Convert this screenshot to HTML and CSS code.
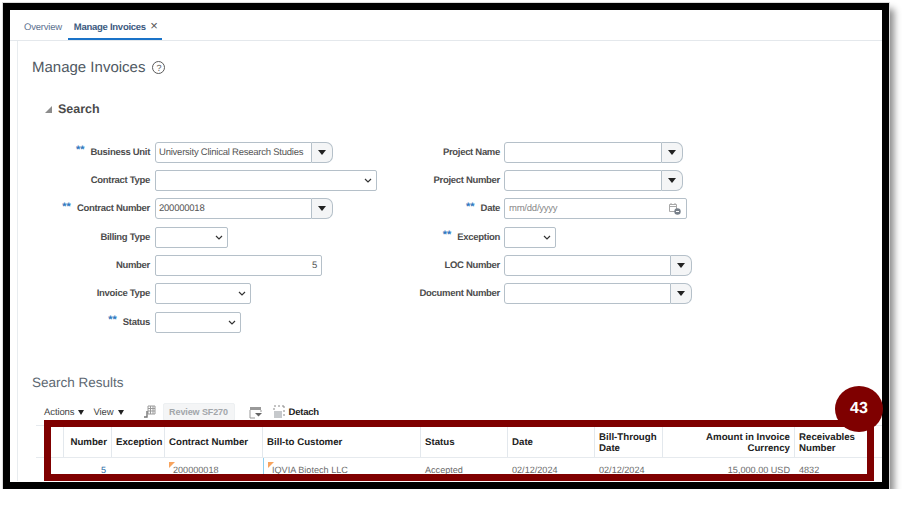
FILE: index.html
```html
<!DOCTYPE html>
<html lang="en">
<head>
<meta charset="utf-8">
<title>Manage Invoices</title>
<link rel="stylesheet" href="styles.css">
</head>
<body>
<div class="frame">
  <nav class="tabs">
    <span class="tab">Overview</span>
    <span class="tab active">Manage Invoices <span class="close">×</span></span>
  </nav>
  <main class="panel">
    <h1 class="title">Manage Invoices <span class="help">?</span></h1>
    <h2 class="search-head"><span class="disclosure"></span>Search</h2>
    <div class="form">
      <label class="label"><span class="stars">**</span>Business Unit</label>
      <div class="combo w-178"><span class="value">University Clinical Research Studies</span><span class="drop"><i></i></span></div>
      <label class="label">Project Name</label>
      <div class="combo w-179"><span class="value"></span><span class="drop"><i></i></span></div>

      <label class="label">Contract Type</label>
      <div class="input w-222"><svg class="chev" viewBox="0 0 8 5"><path d="M1 1l3 3 3-3"/></svg></div>
      <label class="label">Project Number</label>
      <div class="combo w-179"><span class="value"></span><span class="drop"><i></i></span></div>

      <label class="label"><span class="stars">**</span>Contract Number</label>
      <div class="combo w-178"><span class="value">200000018</span><span class="drop"><i></i></span></div>
      <label class="label"><span class="stars">**</span>Date</label>
      <div class="input w-183"><span class="placeholder">mm/dd/yyyy</span>
        <svg class="cal" viewBox="0 0 13 13"><path d="M1.500 2.500h7v7h-7zM3 1v2M7 1v2M1.500 4.500h7" fill="none" stroke="#a8a8a8"/><circle cx="9.500" cy="9.500" r="3.200" fill="#77808a"/><path d="M8 9.500h3" stroke="#fff"/></svg>
      </div>

      <label class="label">Billing Type</label>
      <div class="input w-73"><svg class="chev" viewBox="0 0 8 5"><path d="M1 1l3 3 3-3"/></svg></div>
      <label class="label"><span class="stars">**</span>Exception</label>
      <div class="input w-52"><svg class="chev" viewBox="0 0 8 5"><path d="M1 1l3 3 3-3"/></svg></div>

      <label class="label">Number</label>
      <div class="input w-167 right"><span>5</span></div>
      <label class="label">LOC Number</label>
      <div class="combo w-188"><span class="value"></span><span class="drop"><i></i></span></div>

      <label class="label">Invoice Type</label>
      <div class="input w-96"><svg class="chev" viewBox="0 0 8 5"><path d="M1 1l3 3 3-3"/></svg></div>
      <label class="label">Document Number</label>
      <div class="combo w-188"><span class="value"></span><span class="drop"><i></i></span></div>

      <label class="label"><span class="stars">**</span>Status</label>
      <div class="input w-86"><svg class="chev" viewBox="0 0 8 5"><path d="M1 1l3 3 3-3"/></svg></div>
    </div>

    <h2 class="results-head">Search Results</h2>
    <div class="toolbar">
      <span class="menu">Actions<i></i></span>
      <span class="menu">View<i></i></span>
      <svg class="tool tool-freeze" viewBox="0 0 12 14"><path d="M4 1h7v8H4zM4 3.500h7M6.500 1v8M9 1v8M4 6h7" fill="none" stroke="#9a9a9a"/><path d="M3 6v6H0" fill="none" stroke="#777" stroke-width="1.400"/></svg>
      <button class="btn-disabled">Review SF270</button>
      <svg class="tool tool-export" viewBox="0 0 13 13"><path d="M1 1h11v3H1z" fill="#999"/><path d="M1 4v8h5M12 4v2" fill="none" stroke="#999"/><path d="M6 7h7l-3.500 3.500z" fill="#666"/></svg>
      <svg class="tool tool-detach" viewBox="0 0 12 14"><path d="M1 1h2M5 1h2M9 1h2v2M11 5v2M11 9v2M1 3v2" fill="none" stroke="#888"/><path d="M1 6h8v7H1z" fill="#c6c9cc"/></svg>
      <span class="detach">Detach</span>
    </div>
    <div class="table">
      <div class="hrow">
        <div class="th"></div>
        <div class="th r">Number</div>
        <div class="th">Exception</div>
        <div class="th">Contract Number</div>
        <div class="th">Bill-to Customer</div>
        <div class="th">Status</div>
        <div class="th">Date</div>
        <div class="th">Bill-Through<br>Date</div>
        <div class="th r">Amount in Invoice<br>Currency</div>
        <div class="th">Receivables<br>Number</div>
      </div>
      <div class="drow">
        <div class="td"></div>
        <div class="td r link">5</div>
        <div class="td"></div>
        <div class="td flagged">200000018</div>
        <div class="td flagged mark">IQVIA Biotech LLC</div>
        <div class="td">Accepted</div>
        <div class="td">02/12/2024</div>
        <div class="td">02/12/2024</div>
        <div class="td r">15,000.00 USD</div>
        <div class="td">4832</div>
      </div>
    </div>
  </main>
  <div class="callout"></div>
  <div class="badge">43</div>
</div>
</body>
</html>
```
FILE: styles.css
```css
* { box-sizing: border-box; }
html, body { margin: 0; padding: 0; background: #fff; overflow: hidden; }
body {
  padding: 3px 0 0 3px;
  font-family: "Liberation Sans", Arial, sans-serif;
  color: #4f4f4f;
  text-rendering: geometricPrecision;
}

.frame {
  position: relative;
  width: 886px;
  height: 486px;
  border: 7px solid #000;
  background: #fff;
  box-shadow: 0 0 0 1px #dcdcdc, 5px 6px 7px #8a8a8a;
}

.tabs {
  display: flex;
  height: 31px;
  padding-left: 7px;
  align-items: flex-end;
  border-bottom: 1px solid #e4e8ec;
}
.tab {
  height: 30px;
  padding: 11px 7px 0;
  font-size: 9.500px;
  letter-spacing: -0.220px;
  line-height: 13px;
  color: #5d7290;
  white-space: nowrap;
}
.tab.active {
  width: 94px;
  margin-left: -1px;
  padding-left: 6px;
  font-weight: bold;
  color: #3c5a80;
  letter-spacing: -0.270px;
  border-bottom: 2px solid #1a73c8;
}
.close { margin-left: 2px; font-size: 13px; font-weight: normal; color: #555; line-height: 10px; }

.panel {
  margin-left: 7px;
  height: 440px;
  border-left: 1px solid #e8ecef;
  overflow: hidden;
}
.title {
  display: flex;
  align-items: center;
  gap: 7px;
  margin: 16.500px 0 0 14px;
  height: 20px;
  font-size: 15px;
  font-weight: normal;
  color: #4f5963;
}
.help {
  display: inline-flex;
  align-items: center;
  justify-content: center;
  width: 13px;
  height: 13px;
  border: 1px solid #5a5a5a;
  border-radius: 50%;
  font-size: 9px;
  color: #555;
}
.search-head {
  display: flex;
  align-items: center;
  margin: 23.500px 0 0 27px;
  height: 16px;
  font-size: 12.500px;
  font-weight: bold;
  color: #4a4a4a;
}
.disclosure {
  width: 0;
  height: 0;
  margin-right: 6px;
  border-style: solid;
  border-width: 0 0 7px 7px;
  border-color: transparent transparent #8c8c8c transparent;
}

.form {
  display: grid;
  grid-template-columns: 137px 222px 127px 1fr;
  grid-auto-rows: 21px;
  row-gap: 7.400px;
  margin-top: 24.500px;
}
.label {
  display: flex;
  justify-content: flex-end;
  align-items: center;
  padding-right: 5px;
  font-size: 9.500px;
  letter-spacing: -0.300px;
  font-weight: bold;
  color: #4d4d4d;
  white-space: nowrap;
}
.stars {
  margin-right: 6px;
  font-size: 11px;
  letter-spacing: 0;
  color: #2f78c0;
  transform: translateY(-2px);
}
.label:nth-child(4n + 3) { padding-right: 4px; }

.combo, .input {
  display: flex;
  align-items: center;
  height: 21px;
  font-size: 9.500px;
  letter-spacing: -0.230px;
  color: #555;
}
.combo .value {
  flex: 1;
  height: 100%;
  padding: 0 3px;
  line-height: 19px;
  border: 1px solid #b5c0c9;
  border-radius: 3px 0 0 3px;
  background: #fff;
  white-space: nowrap;
  overflow: hidden;
}
.drop {
  display: flex;
  flex: none;
  align-items: center;
  justify-content: center;
  width: 21px;
  height: 100%;
  border: 1px solid #b5c0c9;
  border-left: 0;
  border-radius: 0 7px 7px 0;
  background: #f4f5f6;
}
.drop i {
  width: 0;
  height: 0;
  border-style: solid;
  border-width: 5px 4px 0;
  border-color: #222 transparent transparent;
}
.input {
  justify-content: space-between;
  padding: 0 4px;
  border: 1px solid #b5c0c9;
  border-radius: 2px;
  background: #fff;
}
.input.right { justify-content: flex-end; }
.chev { width: 8px; height: 5px; margin-left: auto; fill: none; stroke: #333; stroke-width: 1.200; }
.placeholder { color: #8a8a8a; }
.cal { width: 13px; height: 13px; margin-right: 1px; }

.w-52 { width: 52px; }
.w-73 { width: 73px; }
.w-86 { width: 86px; }
.w-96 { width: 96px; }
.w-167 { width: 167px; }
.w-178 { width: 178px; }
.w-179 { width: 179px; }
.w-183 { width: 183px; }
.w-188 { width: 188px; }
.w-222 { width: 222px; }

.results-head {
  margin: 41.500px 0 0 14px;
  height: 17px;
  font-size: 13.500px;
  line-height: 17px;
  font-weight: normal;
  color: #5d6872;
}
.toolbar {
  display: flex;
  align-items: center;
  height: 18px;
  margin: 12px 0 0 26px;
  font-size: 9.500px;
  letter-spacing: -0.100px;
  color: #444;
}
.menu { display: flex; align-items: center; margin-right: 9px; }
.menu i {
  width: 0;
  height: 0;
  margin-left: 4px;
  border-style: solid;
  border-width: 5px 3.500px 0;
  border-color: #222 transparent transparent;
}
.tool { flex: none; }
.tool-freeze { width: 12px; height: 14px; margin-left: 11px; }
.tool-export { width: 13px; height: 13px; margin-left: 14px; }
.tool-detach { width: 12px; height: 14px; margin-left: 11px; }
.btn-disabled {
  width: 72px;
  height: 18px;
  margin-left: 7px;
  padding: 0;
  border: 1px solid #edf0f2;
  border-radius: 2px;
  background: #f4f5f6;
  font: bold 9px "Liberation Sans", Arial, sans-serif;
  letter-spacing: -0.100px;
  color: #a2a6aa;
}
.detach { margin-left: 4px; font-size: 9.500px; letter-spacing: -0.200px; font-weight: bold; color: #222; }

.table { margin: 4px 0 0 18px; }
.hrow, .drow {
  display: grid;
  grid-template-columns: 28px 48px 53px 98px 158px 87px 87px 68px 132px 1fr;
}
.hrow { height: 33px; border-top: 1px solid #e6eaee; border-bottom: 1px solid #e6eaee; }
.drow { height: 22px; }
.th {
  display: flex;
  flex-direction: column;
  justify-content: center;
  padding: 2px 4px 0;
  font-size: 9.700px;
  line-height: 11px;
  font-weight: bold;
  color: #222;
  border-right: 1px solid #e3e8ed;
  white-space: nowrap;
}
.th:last-child { border-right: 0; }
.th.r { text-align: right; }
.td {
  padding: 6px 4px 0;
  font-size: 9.100px;
  line-height: 12px;
  color: #6a6a6a;
  white-space: nowrap;
}
.td.r { padding-right: 5px; text-align: right; }
.td.link { color: #2f6fa8; padding-right: 6px; }
.flagged { position: relative; padding-left: 8px; }
.flagged::before {
  content: "";
  position: absolute;
  left: 4px;
  top: 4px;
  border-style: solid;
  border-width: 6px 6px 0 0;
  border-color: #f7a45f transparent transparent;
}
.mark { border-left: 1px solid #8ed0f0; }

.callout {
  position: absolute;
  left: 34px;
  top: 410px;
  width: 830px;
  height: 61px;
  border: 7px solid #7f0000;
}
.badge {
  position: absolute;
  left: 825px;
  top: 376px;
  width: 48px;
  height: 46px;
  border-radius: 50%;
  background: #7f0000;
  color: #fff;
  font-size: 16px;
  font-weight: bold;
  line-height: 46px;
  text-align: center;
}
```
